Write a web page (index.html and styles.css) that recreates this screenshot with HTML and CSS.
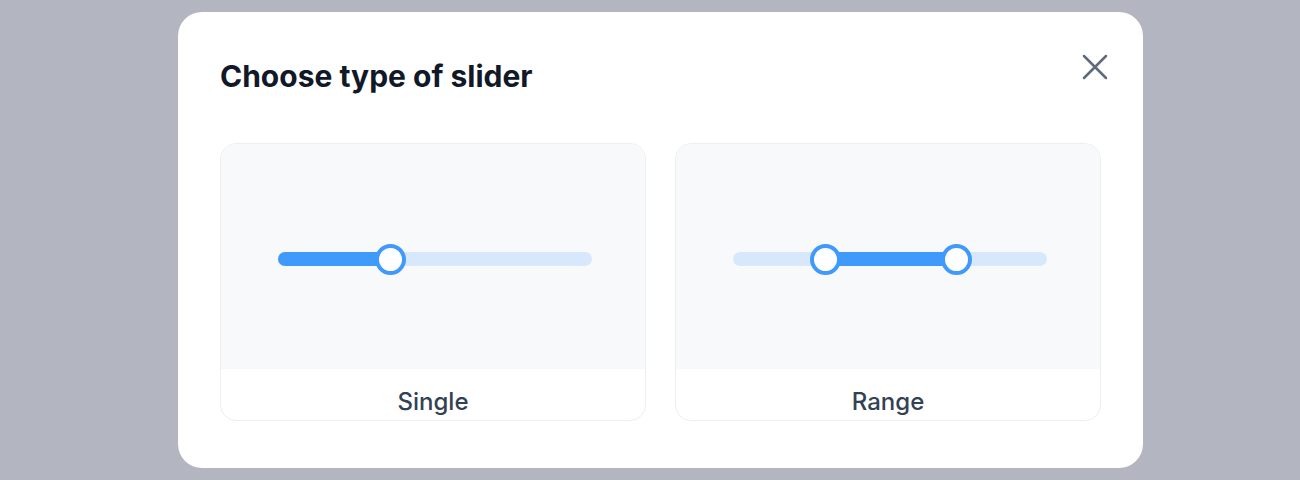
FILE: index.html
```html
<!DOCTYPE html>
<html>
<head>
<meta charset="utf-8">
<link rel="stylesheet" href="styles.css">
</head>
<body>
<div class="overlay">
  <div class="modal">
    <div class="header">
      <h2 class="title">Choose type of slider</h2>
      <button class="close" aria-label="Close">
        <svg width="26" height="26" viewBox="0 0 26 26"><path d="M2 2 L24 24 M24 2 L2 24" stroke="#5f6b7b" stroke-width="2.5" stroke-linecap="round" fill="none"/></svg>
      </button>
    </div>
    <div class="cards">
      <div class="card">
        <div class="preview">
          <div class="track">
            <div class="fill" style="left:0;width:36%"></div>
            <div class="thumb" style="left:36%"></div>
          </div>
        </div>
        <div class="label">Single</div>
      </div>
      <div class="card">
        <div class="preview">
          <div class="track">
            <div class="fill" style="left:29.5%;width:41.7%"></div>
            <div class="thumb" style="left:29.5%"></div>
            <div class="thumb" style="left:71.2%"></div>
          </div>
        </div>
        <div class="label">Range</div>
      </div>
    </div>
  </div>
</div>
</body>
</html>
```
FILE: styles.css
```css
* { box-sizing: border-box; }
html, body { margin: 0; padding: 0; }
body {
  width: 1300px;
  height: 480px;
  background: #b3b6c1;
  font-family: Inter, "Noto Sans", sans-serif;
  overflow: hidden;
}
.overlay {
  padding-top: 12px;
  padding-left: 178px;
  display: flex;
}
.modal {
  width: 965px;
  height: 456px;
  background: #ffffff;
  border-radius: 24px;
  padding: 0 42px 0 42px;
}
.header {
  display: flex;
  justify-content: space-between;
  align-items: flex-start;
  height: 131px;
}
.title {
  margin: 0;
  padding-top: 46px;
  font-size: 30px;
  font-weight: 700;
  color: #111827;
  letter-spacing: 0;
}
.close {
  margin-top: 42px;
  margin-right: -7px;
  padding: 0;
  border: none;
  background: none;
  width: 26px;
  height: 26px;
  display: flex;
}
.cards {
  display: grid;
  grid-template-columns: 426px 426px;
  column-gap: 29px;
}
.card {
  height: 278px;
  border: 1px solid #eceef2;
  border-radius: 16px;
  overflow: hidden;
  display: flex;
  flex-direction: column;
}
.preview {
  height: 225px;
  background: #f8f9fb;
  display: flex;
  align-items: center;
  justify-content: center;
  padding-top: 5px;
  padding-left: 3px;
}
.track {
  position: relative;
  width: 314px;
  height: 14px;
  border-radius: 7px;
  background: #d7e8fd;
}
.fill {
  position: absolute;
  top: 0;
  height: 14px;
  border-radius: 7px;
  background: #3f9afc;
}
.thumb {
  position: absolute;
  top: 50%;
  width: 31px;
  height: 31px;
  margin-left: -15.5px;
  margin-top: -15.5px;
  border-radius: 50%;
  background: #ffffff;
  border: 4px solid #3f9afc;
}
.label {
  flex: 1;
  display: flex;
  align-items: center;
  justify-content: center;
  font-size: 24px;
  font-weight: 500;
  color: #334155;
  padding-top: 14px;
}
```
